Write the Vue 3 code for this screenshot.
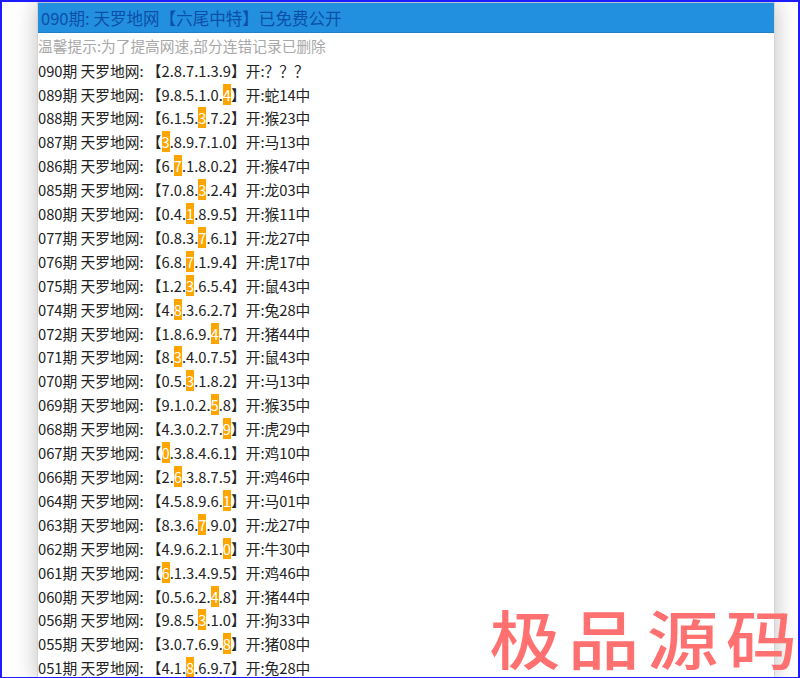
<script setup>
const rows = [
  ['089', '9.8.5.1.0.4', 5, '蛇14中'],
  ['088', '6.1.5.3.7.2', 3, '猴23中'],
  ['087', '3.8.9.7.1.0', 0, '马13中'],
  ['086', '6.7.1.8.0.2', 1, '猴47中'],
  ['085', '7.0.8.3.2.4', 3, '龙03中'],
  ['080', '0.4.1.8.9.5', 2, '猴11中'],
  ['077', '0.8.3.7.6.1', 3, '龙27中'],
  ['076', '6.8.7.1.9.4', 2, '虎17中'],
  ['075', '1.2.3.6.5.4', 2, '鼠43中'],
  ['074', '4.8.3.6.2.7', 1, '兔28中'],
  ['072', '1.8.6.9.4.7', 4, '猪44中'],
  ['071', '8.3.4.0.7.5', 1, '鼠43中'],
  ['070', '0.5.3.1.8.2', 2, '马13中'],
  ['069', '9.1.0.2.5.8', 4, '猴35中'],
  ['068', '4.3.0.2.7.9', 5, '虎29中'],
  ['067', '0.3.8.4.6.1', 0, '鸡10中'],
  ['066', '2.6.3.8.7.5', 1, '鸡46中'],
  ['064', '4.5.8.9.6.1', 5, '马01中'],
  ['063', '8.3.6.7.9.0', 3, '龙27中'],
  ['062', '4.9.6.2.1.0', 5, '牛30中'],
  ['061', '6.1.3.4.9.5', 0, '鸡46中'],
  ['060', '0.5.6.2.4.8', 4, '猪44中'],
  ['056', '9.8.5.3.1.0', 3, '狗33中'],
  ['055', '3.0.7.6.9.8', 5, '猪08中'],
  ['051', '4.1.8.6.9.7', 2, '兔28中'],
].map(([period, nums, hit, result]) => ({ period, nums: nums.split('.'), hit, result }))
</script>

<template>
  <div class="frame">
    <main class="panel">
      <h1 class="title">090期: 天罗地网【六尾中特】已免费公开</h1>
      <p class="tip">温馨提示:为了提高网速,部分连错记录已删除</p>
      <ul class="list">
        <li class="row">090期 天罗地网: 【2.8.7.1.3.9】开:？？？</li>
        <li v-for="r in rows" :key="r.period" class="row">
          {{ r.period }}期 天罗地网: 【<template v-for="(n, i) in r.nums" :key="i"><span v-if="i === r.hit" class="hit">{{ n }}</span><template v-else>{{ n }}</template><template v-if="i < r.nums.length - 1">.</template></template>】开:{{ r.result }}
        </li>
      </ul>
    </main>
    <div class="mark">极品源<span class="mark-end">码</span></div>
  </div>
</template>

<style scoped>
.frame {
  position: relative;
  box-sizing: border-box;
  width: 800px;
  height: 678px;
  overflow: hidden;
  background: #fff;
  border: solid #1c1cff;
  border-width: 2px 2px 1px 2px;
  padding-left: 35px;
  font-family: "Noto Sans CJK SC", sans-serif;
}
.panel {
  width: 738px;
  box-sizing: border-box;
  background: #fff;
  border: solid #d4d4d4;
  border-width: 0 1px;
  box-shadow: 0 0 22px rgba(0, 0, 0, 0.26);
}
.title {
  margin: 0;
  height: 31px;
  box-sizing: border-box;
  padding-left: 3px;
  background: #2390df;
  border-top: 1px solid #b5c4cf;
  border-bottom: 1px solid #1f7fc8;
  color: #0b4fa8;
  font-size: 16.56px;
  font-weight: 400;
  line-height: 31px;
}
.tip {
  margin: 0;
  height: 25.6px;
  color: #a8a8a8;
  font-size: 14.72px;
  line-height: 25px;
}
.list {
  margin: 0;
  padding: 0;
  list-style: none;
}
.row {
  height: 23.92px;
  color: #222;
  font-size: 14.72px;
  line-height: 23.92px;
  white-space: nowrap;
}
.hit {
  background: #ffa500;
  color: #fff;
}
.mark {
  position: absolute;
  right: 1px;
  bottom: 6px;
  color: #ff7070;
  font-size: 66px;
  font-weight: 500;
  letter-spacing: 7px;
  line-height: 72px;
  white-space: nowrap;
  transform: scale(1.08, 0.97);
  transform-origin: right bottom;
}
.mark-end {
  letter-spacing: 0;
}
</style>
